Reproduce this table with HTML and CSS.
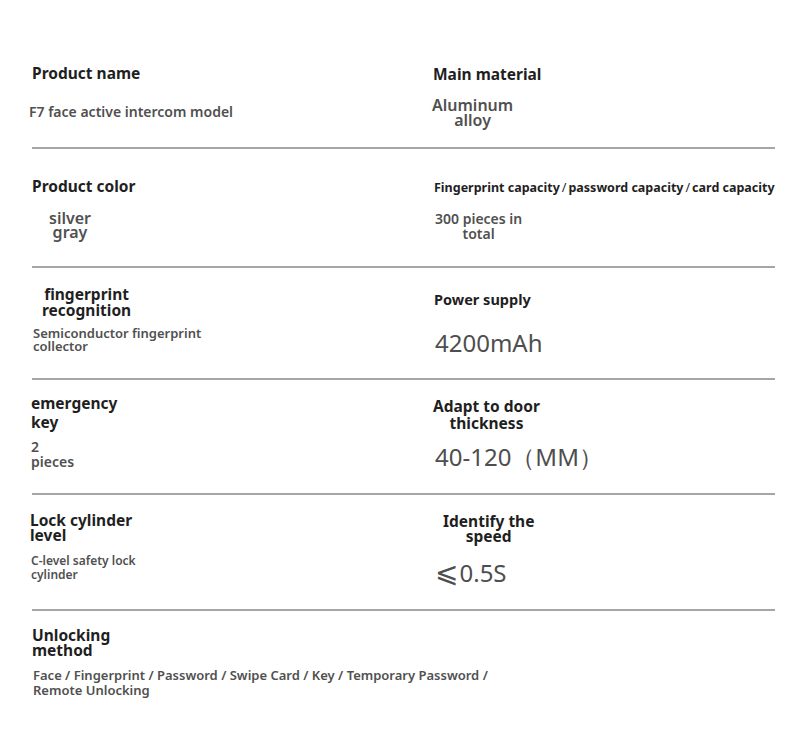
FILE: index.html
```html
<!DOCTYPE html>
<html lang="en">
<head>
<meta charset="utf-8">
<title>Specifications</title>
<link rel="stylesheet" href="styles.css">
</head>
<body>
<div class="sheet">
  <div class="row r1">
    <div class="cell left">
      <div class="label">Product name</div>
      <div class="value">F7 face active intercom model</div>
    </div>
    <div class="cell right">
      <div class="label">Main material</div>
      <div class="value center">Aluminum<br>alloy</div>
    </div>
  </div>
  <div class="row r2">
    <div class="cell left">
      <div class="label">Product color</div>
      <div class="value center">silver<br>gray</div>
    </div>
    <div class="cell right">
      <div class="label small">Fingerprint capacity<span class="sl">/</span>password capacity<span class="sl">/</span>card capacity</div>
      <div class="value center">300 pieces in<br>total</div>
    </div>
  </div>
  <div class="row r3">
    <div class="cell left">
      <div class="label center">fingerprint<br>recognition</div>
      <div class="value small">Semiconductor fingerprint<br>collector</div>
    </div>
    <div class="cell right">
      <div class="label">Power supply</div>
      <div class="value big">4200mAh</div>
    </div>
  </div>
  <div class="row r4">
    <div class="cell left">
      <div class="label">emergency<br>key</div>
      <div class="value">2<br>pieces</div>
    </div>
    <div class="cell right">
      <div class="label center">Adapt to door<br>thickness</div>
      <div class="value big">40-120（MM）</div>
    </div>
  </div>
  <div class="row r5">
    <div class="cell left">
      <div class="label">Lock cylinder<br>level</div>
      <div class="value tiny">C-level safety lock<br>cylinder</div>
    </div>
    <div class="cell right">
      <div class="label center">Identify the<br>speed</div>
      <div class="value big"><span class="le">⩽</span>0.5S</div>
    </div>
  </div>
  <div class="row r6">
    <div class="cell left wide">
      <div class="label">Unlocking<br>method</div>
      <div class="value small">Face / Fingerprint / Password / Swipe Card / Key / Temporary Password /<br>Remote Unlocking</div>
    </div>
  </div>
</div>
</body>
</html>
```
FILE: styles.css
```css
html, body {
  margin: 0;
  padding: 0;
  background: #ffffff;
}

body {
  font-family: "Noto Sans", "Open Sans", "DejaVu Sans", sans-serif;
  width: 800px;
  height: 744px;
  overflow: hidden;
}

.sheet {
  margin-left: 32px;
  width: 743px;
}

.row {
  display: grid;
  grid-template-columns: 401px 1fr;
  border-bottom: 2px solid #a6a6a6;
}

.row.r6 {
  border-bottom: none;
}

.cell {
  display: flex;
  flex-direction: column;
  align-items: flex-start;
}

.cell.wide {
  grid-column: 1 / span 2;
}

.label {
  font-size: 15.5px;
  font-weight: 700;
  color: #1f1f1f;
  line-height: 18px;
  white-space: nowrap;
}

.label.small {
  font-size: 12.5px;
  line-height: 15px;
}

.label .sl {
  font-weight: 400;
  padding: 0 2px;
}

.value {
  font-size: 14px;
  font-weight: 600;
  color: #505050;
  line-height: 15px;
  white-space: nowrap;
}

.value.small {
  font-size: 13px;
  line-height: 14px;
}

.value.tiny {
  font-size: 12px;
  line-height: 14px;
}

.value.big {
  font-size: 24px;
  font-weight: 400;
  color: #4e4e4e;
  line-height: 28px;
}

.value .le {
  font-size: 28px;
  margin-right: 1px;
}

.center {
  text-align: center;
}

/* Row 1 */
.r1 { height: 147px; }
.r1 .left { padding-top: 64px; }
.r1 .left .value { margin-top: 22px; margin-left: -3px; }
.r1 .right { padding-top: 65px; }
.r1 .right .value { margin-top: 15px; margin-left: -1px; font-size: 16px; line-height: 15px; }

/* Row 2 */
.r2 { height: 117px; }
.r2 .left { padding-top: 28px; }
.r2 .left .value { margin-top: 16px; margin-left: 17px; font-size: 16px; line-height: 14px; }
.r2 .right { padding-top: 31px; }
.r2 .right .label { margin-left: 1px; }
.r2 .right .value { margin-top: 16px; margin-left: 2px; }

/* Row 3 */
.r3 { height: 110px; }
.r3 .left { padding-top: 18px; }
.r3 .left .label { margin-left: 10px; line-height: 16px; }
.r3 .left .value { margin-top: 9px; margin-left: 1px; line-height: 13px; }
.r3 .right { padding-top: 23px; }
.r3 .right .label { font-size: 14.5px; line-height: 17px; margin-left: 1px; }
.r3 .right .value { margin-top: 21px; margin-left: 2px; }

/* Row 4 */
.r4 { height: 113px; }
.r4 .left { padding-top: 14px; }
.r4 .left .label { line-height: 19px; margin-left: -1px; }
.r4 .left .value { margin-top: 7px; margin-left: -1px; }
.r4 .right { padding-top: 18px; }
.r4 .right .label { line-height: 17px; }
.r4 .right .value { margin-top: 11px; margin-left: 2px; }

/* Row 5 */
.r5 { height: 114px; }
.r5 .left { padding-top: 18px; }
.r5 .left .label { line-height: 15px; margin-left: -2px; }
.r5 .left .value { margin-top: 11px; margin-left: -1px; }
.r5 .right { padding-top: 19px; }
.r5 .right .label { line-height: 15px; margin-left: 10px; }
.r5 .right .value { margin-top: 13px; margin-left: 2px; }

/* Row 6 */
.r6 { height: 133px; }
.r6 .left { padding-top: 17px; }
.r6 .left .label { line-height: 15px; }
.r6 .left .value { margin-top: 10px; margin-left: 1px; line-height: 15px; }
```
